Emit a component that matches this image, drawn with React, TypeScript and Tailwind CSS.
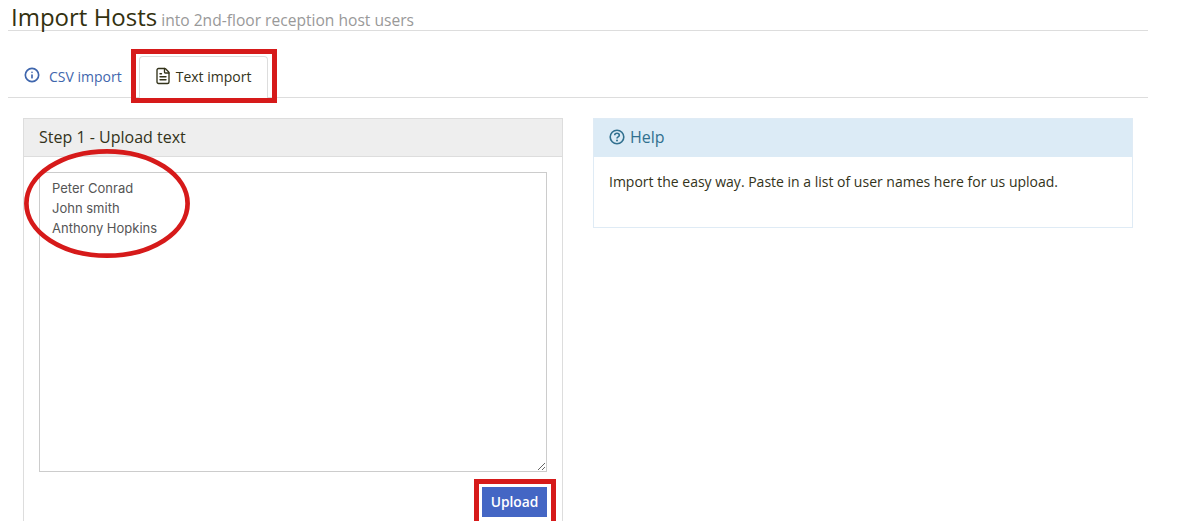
import { FileText, Info } from 'lucide-react'

const NAMES = 'Peter Conrad\nJohn smith\nAnthony Hopkins'

function HelpIcon() {
  return (
    <svg viewBox="0 0 16 16" className="w-[16px] h-[16px] text-[#31708f]" fill="none" stroke="currentColor">
      <circle cx="8" cy="8" r="6.8" strokeWidth="1.6" />
      <path d="M5.7 6.3c0-1.3 1.1-2 2.3-2 1.3 0 2.3.7 2.3 1.9 0 1.7-2.3 1.5-2.3 3.2" strokeWidth="1.6" />
      <circle cx="8" cy="11.6" r="1" fill="currentColor" stroke="none" />
    </svg>
  )
}

export default function App() {
  return (
    <div className="relative w-[1179px] h-[521px] overflow-hidden bg-white font-['Open_Sans',sans-serif] text-[#333300]">
      <div className="ml-[8px] w-[1140px]">
        <div className="h-[31px] pl-[3px] border-b border-[#dddddd] flex items-baseline gap-[4px]">
          <h1 className="text-[24px] leading-[36px] -mt-[1px] text-[#33310f]">Import Hosts</h1>
          <span className="text-[15.6px] text-[#999999]">into 2nd-floor reception host users</span>
        </div>

        <div className="mt-[25px] h-[42px] border-b border-[#dddddd] flex pl-[16px] gap-[8px]">
          <div className="flex items-center h-[41px] gap-[9px] pr-[9px] text-[14px] text-[#3f66ad]">
            <Info className="w-[16px] h-[16px] -mt-[3px]" strokeWidth={2.5} />
            <span>CSV import</span>
          </div>
          <div className="flex items-center h-[42px] pb-[2px] gap-[4px] pl-[14px] pr-[16px] bg-white border border-b-0 border-[#dddddd] rounded-t-[4px] text-[14px] text-[#33331a]">
            <FileText className="w-[18px] h-[18px] -mt-[2px]" strokeWidth={1.8} />
            <span>Text import</span>
          </div>
        </div>

        <div className="mt-[20px] ml-[15px] flex gap-[30px] items-start">
          <section className="w-[540px] h-[420px] border border-[#dddddd] border-b-0">
            <div className="h-[38px] px-[15px] pb-[2px] flex items-center bg-[#eeeeee] border-b border-[#dddddd] text-[16px] text-[#33331a]">
              Step 1 - Upload text
            </div>
            <div className="px-[15px] pt-[15px]">
              <textarea
                defaultValue={NAMES}
                className="block w-[508px] h-[300px] border border-[#cccccc] px-[12px] py-[5px] text-[13px] leading-[20px] text-[#555555] font-['Inter',sans-serif] outline-none"
              />
              <div className="flex justify-end mt-[15px]">
                <button className="w-[65px] h-[30px] bg-[#4466c4] text-white text-[13.8px] font-semibold">Upload</button>
              </div>
            </div>
          </section>

          <section className="w-[540px] h-[110px] border border-[#dfebf5]">
            <div className="h-[38px] px-[15px] pb-[2px] flex items-center gap-[5px] bg-[#dcebf6] text-[16px] text-[#31708f]">
              <HelpIcon />
              <span>Help</span>
            </div>
            <p className="px-[15px] pt-[15px] text-[14px] leading-[20px] text-[#33331a]">
              Import the easy way. Paste in a list of user names here for us upload.
            </p>
          </section>
        </div>
      </div>

      {/* red annotations on top of the screenshot */}
      <div className="absolute left-[131px] top-[49px] w-[146px] h-[54px] border-[5px] border-[#d61a1a]" />
      <div className="absolute left-[474px] top-[479px] w-[82px] h-[48px] border-[5px] border-[#d61a1a]" />
      <svg className="absolute left-[20px] top-[146px] w-[175px] h-[116px]" viewBox="0 0 175 116" fill="none">
        <ellipse cx="87" cy="57.5" rx="80.6" ry="52.2" stroke="#d61a1a" strokeWidth="4.7" />
      </svg>
    </div>
  )
}
